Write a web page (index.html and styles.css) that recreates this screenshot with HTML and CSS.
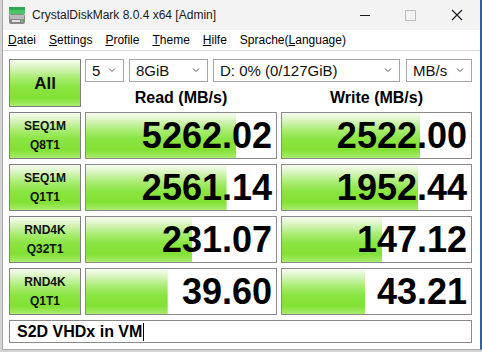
FILE: index.html
```html
<!DOCTYPE html>
<html lang="de">
<head>
    <meta charset="UTF-8">
    <title>CrystalDiskMark 8.0.4 x64 [Admin]</title>
    <link rel="stylesheet" href="styles.css">
</head>
<body>

    <!-- Window -->
    <div class="window">
        <!-- Title bar -->
        <div class="titlebar">
            <svg class="app-icon" width="16" height="17" viewBox="0 0 16 17">
                <rect x="0" y="0" width="16" height="3" fill="#2fa84f"/>
                <rect x="0" y="3" width="16" height="4" fill="#4cc46a"/>
                <rect x="0" y="7" width="16" height="10" rx="2" fill="#8a8a8a"/>
                <rect x="1" y="8" width="14" height="4" fill="#b9b9b9"/>
                <rect x="3" y="13" width="8" height="2" fill="#e0e0e0"/>
                <rect x="12" y="13" width="2" height="2" fill="#5ad35a"/>
            </svg>
            <span class="title">CrystalDiskMark 8.0.4 x64 [Admin]</span>
            <div class="controls">
                <svg class="ctl" width="46" height="30" viewBox="0 0 46 30">
                    <line x1="18" y1="15.5" x2="28" y2="15.5" stroke="#1a1a1a" stroke-width="1"/>
                </svg>
                <svg class="ctl" width="46" height="30" viewBox="0 0 46 30">
                    <rect x="17.5" y="10.5" width="10" height="10" fill="none" stroke="#bdbdbd" stroke-width="1"/>
                </svg>
                <svg class="ctl" width="46" height="30" viewBox="0 0 46 30">
                    <path d="M18 10 L28 20 M28 10 L18 20" stroke="#1a1a1a" stroke-width="1.1"/>
                </svg>
            </div>
        </div>

        <!-- Menu bar -->
        <div class="menubar">
            <span><u>D</u>atei</span>
            <span><u>S</u>ettings</span>
            <span><u>P</u>rofile</span>
            <span><u>T</u>heme</span>
            <span><u>H</u>ilfe</span>
            <span>Sprache(<u>L</u>anguage)</span>
        </div>

        <!-- Benchmark grid -->
        <div class="main">
            <div class="label all">All</div>

            <div class="options">
                <div class="combo count"><span>5</span><svg width="8" height="5" viewBox="0 0 8 5"><path d="M1 0.5 L4 3.5 L7 0.5" fill="none" stroke="#555" stroke-width="1"/></svg></div>
                <div class="combo size"><span>8GiB</span><svg width="8" height="5" viewBox="0 0 8 5"><path d="M1 0.5 L4 3.5 L7 0.5" fill="none" stroke="#555" stroke-width="1"/></svg></div>
                <div class="combo drive"><span>D: 0% (0/127GiB)</span><svg width="8" height="5" viewBox="0 0 8 5"><path d="M1 0.5 L4 3.5 L7 0.5" fill="none" stroke="#555" stroke-width="1"/></svg></div>
                <div class="combo unit"><span>MB/s</span><svg width="8" height="5" viewBox="0 0 8 5"><path d="M1 0.5 L4 3.5 L7 0.5" fill="none" stroke="#555" stroke-width="1"/></svg></div>
            </div>

            <div class="head">Read (MB/s)</div>
            <div class="head">Write (MB/s)</div>

            <!-- Row 1 -->
            <div class="label"><span>SEQ1M</span><span>Q8T1</span></div>
            <div class="meter" style="background-size: 79% 100%"><span class="value">5262.02</span></div>
            <div class="meter" style="background-size: 73% 100%"><span class="value">2522.00</span></div>

            <!-- Row 2 -->
            <div class="label"><span>SEQ1M</span><span>Q1T1</span></div>
            <div class="meter" style="background-size: 74% 100%"><span class="value">2561.14</span></div>
            <div class="meter" style="background-size: 72% 100%"><span class="value">1952.44</span></div>

            <!-- Row 3 -->
            <div class="label"><span>RND4K</span><span>Q32T1</span></div>
            <div class="meter" style="background-size: 56% 100%"><span class="value">231.07</span></div>
            <div class="meter" style="background-size: 53% 100%"><span class="value">147.12</span></div>

            <!-- Row 4 -->
            <div class="label"><span>RND4K</span><span>Q1T1</span></div>
            <div class="meter" style="background-size: 43% 100%"><span class="value">39.60</span></div>
            <div class="meter" style="background-size: 44% 100%"><span class="value">43.21</span></div>

            <!-- Comment -->
            <div class="comment">S2D VHDx in VM<span class="caret"></span></div>
        </div>
    </div>

</body>
</html>
```

FILE: styles.css
```css
/* General */
body {
    margin: 0;
    background-color: #d4d4d4;
    font-family: 'Liberation Sans', Arial, sans-serif;
    color: #000;
}

/* Window frame */
.window {
    box-sizing: border-box;
    width: 480px;
    height: 350px;
    margin-left: 2px;
    background-color: #fff;
    border-left: 1px solid #a8a8a8;
    border-right: 2px solid #2f5f9e;
    border-bottom: 1px solid #a8a8a8;
    display: flex;
    flex-direction: column;
}

/* Title bar */
.titlebar {
    height: 30px;
    background-color: #f3f3f3;
    display: flex;
    align-items: center;
    padding-left: 6px;
}

.app-icon {
    margin-right: 7px;
}

.title {
    font-size: 12px;
    color: #1a1a1a;
}

.controls {
    margin-left: auto;
    display: flex;
}

.ctl {
    display: block;
}

/* Menu bar */
.menubar {
    height: 20px;
    display: flex;
    align-items: center;
    gap: 13px;
    padding-left: 5px;
    font-size: 12px;
    border-bottom: 1px solid #d9d9d9;
}

/* Main grid */
.main {
    padding: 8px 0 0 6px;
    display: grid;
    grid-template-columns: 72px 192px 191px;
    grid-template-rows: 23px 20px repeat(4, 47px) 23px;
    column-gap: 4px;
    row-gap: 5px;
}

/* Shared green gradient */
.label,
.meter {
    --green: linear-gradient(to bottom, #f6fcf0 0%, #daf5c0 16%, #a9ec73 38%, #8ae542 58%, #82e134 82%, #a8ed6c 100%);
}

/* Test labels and All button */
.label {
    box-sizing: border-box;
    border: 1px solid #808080;
    background: var(--green);
    display: flex;
    flex-direction: column;
    align-items: center;
    justify-content: center;
    font-size: 12px;
    font-weight: bold;
    line-height: 19px;
    color: #111;
}

.label.all {
    grid-row: 1 / 3;
    font-size: 17px;
}

/* Option combos */
.options {
    grid-column: 2 / 4;
    display: flex;
    gap: 5px;
}

.combo {
    box-sizing: border-box;
    height: 23px;
    border: 1px solid #a6a6a6;
    background-color: #fff;
    display: flex;
    align-items: center;
    justify-content: space-between;
    padding: 0 7px 0 6px;
    font-size: 15px;
    color: #111;
}

.combo.count { width: 39px; }
.combo.size { width: 79px; }
.combo.drive { width: 187px; margin-right: 1px; }
.combo.unit { width: 66px; }

/* Column headers */
.head {
    display: flex;
    align-items: flex-end;
    justify-content: center;
    font-size: 16px;
    font-weight: bold;
    line-height: 18px;
}

/* Result meters */
.meter {
    box-sizing: border-box;
    border: 1px solid #8a8a8a;
    background: var(--green) left top no-repeat, #fff;
    display: flex;
    align-items: center;
    justify-content: flex-end;
    padding-right: 4px;
}

.value {
    font-size: 36px;
    font-weight: bold;
    line-height: 1;
}

/* Comment box */
.comment {
    grid-column: 1 / 4;
    box-sizing: border-box;
    border: 1px solid #8a8a8a;
    display: flex;
    align-items: center;
    padding-left: 7px;
    font-size: 16px;
    font-weight: bold;
}

.caret {
    width: 1px;
    height: 18px;
    margin-left: 1px;
    background-color: #000;
}
```
